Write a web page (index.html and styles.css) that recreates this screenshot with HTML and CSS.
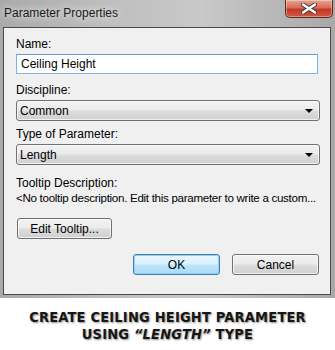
FILE: index.html
```html
<!DOCTYPE html>
<html lang="en">
<head>
    <meta charset="UTF-8">
    <title>Parameter Properties</title>
    <link rel="stylesheet" href="styles.css">
</head>
<body>
    <div class="window">
        <div class="titlebar">
            <span class="title">Parameter Properties</span>
            <button class="close-btn">
                <svg width="16" height="11" viewBox="0 0 16 11">
                    <path d="M2 1.5 L14 9.5 M14 1.5 L2 9.5" stroke="#3a3a3a" stroke-width="4.2" stroke-linecap="round"/>
                    <path d="M2 1.5 L14 9.5 M14 1.5 L2 9.5" stroke="#fff" stroke-width="2.4" stroke-linecap="round"/>
                </svg>
            </button>
        </div>

        <div class="client">
            <label class="field-label">Name:</label>
            <input class="text-input" type="text" value="Ceiling Height">

            <label class="field-label gap-sm">Discipline:</label>
            <div class="combo">
                <span>Common</span>
                <span class="arrow"></span>
            </div>

            <label class="field-label gap-xs">Type of Parameter:</label>
            <div class="combo">
                <span>Length</span>
                <span class="arrow"></span>
            </div>

            <div class="field-label gap-md">Tooltip Description:</div>
            <div class="tooltip-text">&lt;No tooltip description. Edit this parameter to write a custom...</div>

            <button class="win-btn edit-btn">Edit Tooltip...</button>

            <div class="button-row">
                <button class="win-btn default">OK</button>
                <button class="win-btn">Cancel</button>
            </div>
        </div>
    </div>

    <div class="caption">
        <div>CREATE CEILING HEIGHT PARAMETER</div>
        <div>USING <span class="em">&ldquo;LENGTH&rdquo;</span> TYPE</div>
    </div>
</body>
</html>
```

FILE: styles.css
```css
* {
    margin: 0;
    padding: 0;
    box-sizing: border-box;
}

body {
    background: #fff;
    font-family: 'Liberation Sans', Arial, sans-serif;
    font-size: 12px;
    color: #000;
    width: 335px;
}

.window {
    width: 335px;
    height: 298px;
    padding: 0 4px 3px 3px;
    background: linear-gradient(90deg, #a9a9a9 0%, #bdbdbd 30%, #c9c9c9 60%, #b5b5b5 85%, #a8a8a8 100%);
    display: flex;
    flex-direction: column;
}

.titlebar {
    height: 27px;
    display: flex;
    align-items: flex-start;
    justify-content: space-between;
}

.title {
    margin: 6px 0 0 1px;
    font-size: 12px;
    color: #1b1b1b;
    text-shadow: 0 0 6px #e6e6e6, 0 0 10px #dedede;
}

.close-btn {
    width: 48px;
    height: 18px;
    margin-right: -2px;
    border: 1px solid #5a2a22;
    border-top: none;
    border-radius: 0 0 5px 5px;
    background: linear-gradient(180deg, #e8a495 0%, #d86b55 45%, #c0392a 55%, #d2573f 100%);
    box-shadow: inset 0 0 0 1px rgba(255, 255, 255, 0.35);
    display: flex;
    align-items: center;
    justify-content: center;
}

.client {
    flex: 1;
    background: #f0f0f0;
    border: 1px solid #4a4a4a;
    padding: 9px 10px 0 12px;
    display: flex;
    flex-direction: column;
}

.field-label {
    display: block;
    line-height: 14px;
    color: #000;
}

.gap-sm { margin-top: 9px; }
.gap-xs { margin-top: 6px; }
.gap-md { margin-top: 11px; }

.text-input {
    margin-top: 3px;
    width: 302px;
    height: 20px;
    border: 1px solid #7eb4ea;
    border-top-color: #5d9bd9;
    background: #fff;
    padding: 0 4px;
    font-family: inherit;
    font-size: 12px;
    color: #000;
    outline: none;
}

.combo {
    margin-top: 3px;
    width: 304px;
    height: 21px;
    border: 1px solid #707070;
    border-radius: 3px;
    background: linear-gradient(180deg, #f2f2f2 0%, #ebebeb 48%, #dddddd 52%, #cfcfcf 100%);
    box-shadow: inset 0 0 0 1px rgba(255, 255, 255, 0.7);
    display: flex;
    align-items: center;
    justify-content: space-between;
    padding: 0 6px 0 3px;
}

.arrow {
    width: 0;
    height: 0;
    border-left: 4px solid transparent;
    border-right: 4px solid transparent;
    border-top: 4px solid #000;
    margin-top: 1px;
}

.tooltip-text {
    margin-top: 1px;
    line-height: 14px;
    white-space: nowrap;
    font-size: 11.6px;
    letter-spacing: -0.3px;
}

.win-btn {
    height: 21px;
    border: 1px solid #707070;
    border-radius: 3px;
    background: linear-gradient(180deg, #f2f2f2 0%, #ebebeb 48%, #dddddd 52%, #cfcfcf 100%);
    box-shadow: inset 0 0 0 1px rgba(255, 255, 255, 0.7);
    font-family: inherit;
    font-size: 12px;
    color: #000;
}

.edit-btn {
    margin: 13px 0 0 1px;
    width: 95px;
}

.button-row {
    margin-top: 15px;
    display: flex;
    justify-content: flex-end;
    gap: 12px;
    padding-right: 1px;
}

.button-row .win-btn {
    width: 87px;
}

.win-btn.default {
    border-color: #3c7fb1;
    background: linear-gradient(180deg, #eaf6fd 0%, #d9f0fc 48%, #bee6fd 52%, #a7d9f5 100%);
    box-shadow: inset 0 0 0 1px #98d1ef;
}

.caption {
    margin-top: 11px;
    text-align: center;
    font-family: 'DejaVu Sans', sans-serif;
    font-stretch: condensed;
    font-weight: bold;
    font-size: 14.5px;
    line-height: 17px;
    letter-spacing: 0.2px;
    color: #161616;
    text-shadow: 1px 1px 2px rgba(0, 0, 0, 0.45);
}

.caption .em {
    font-style: italic;
}
```
